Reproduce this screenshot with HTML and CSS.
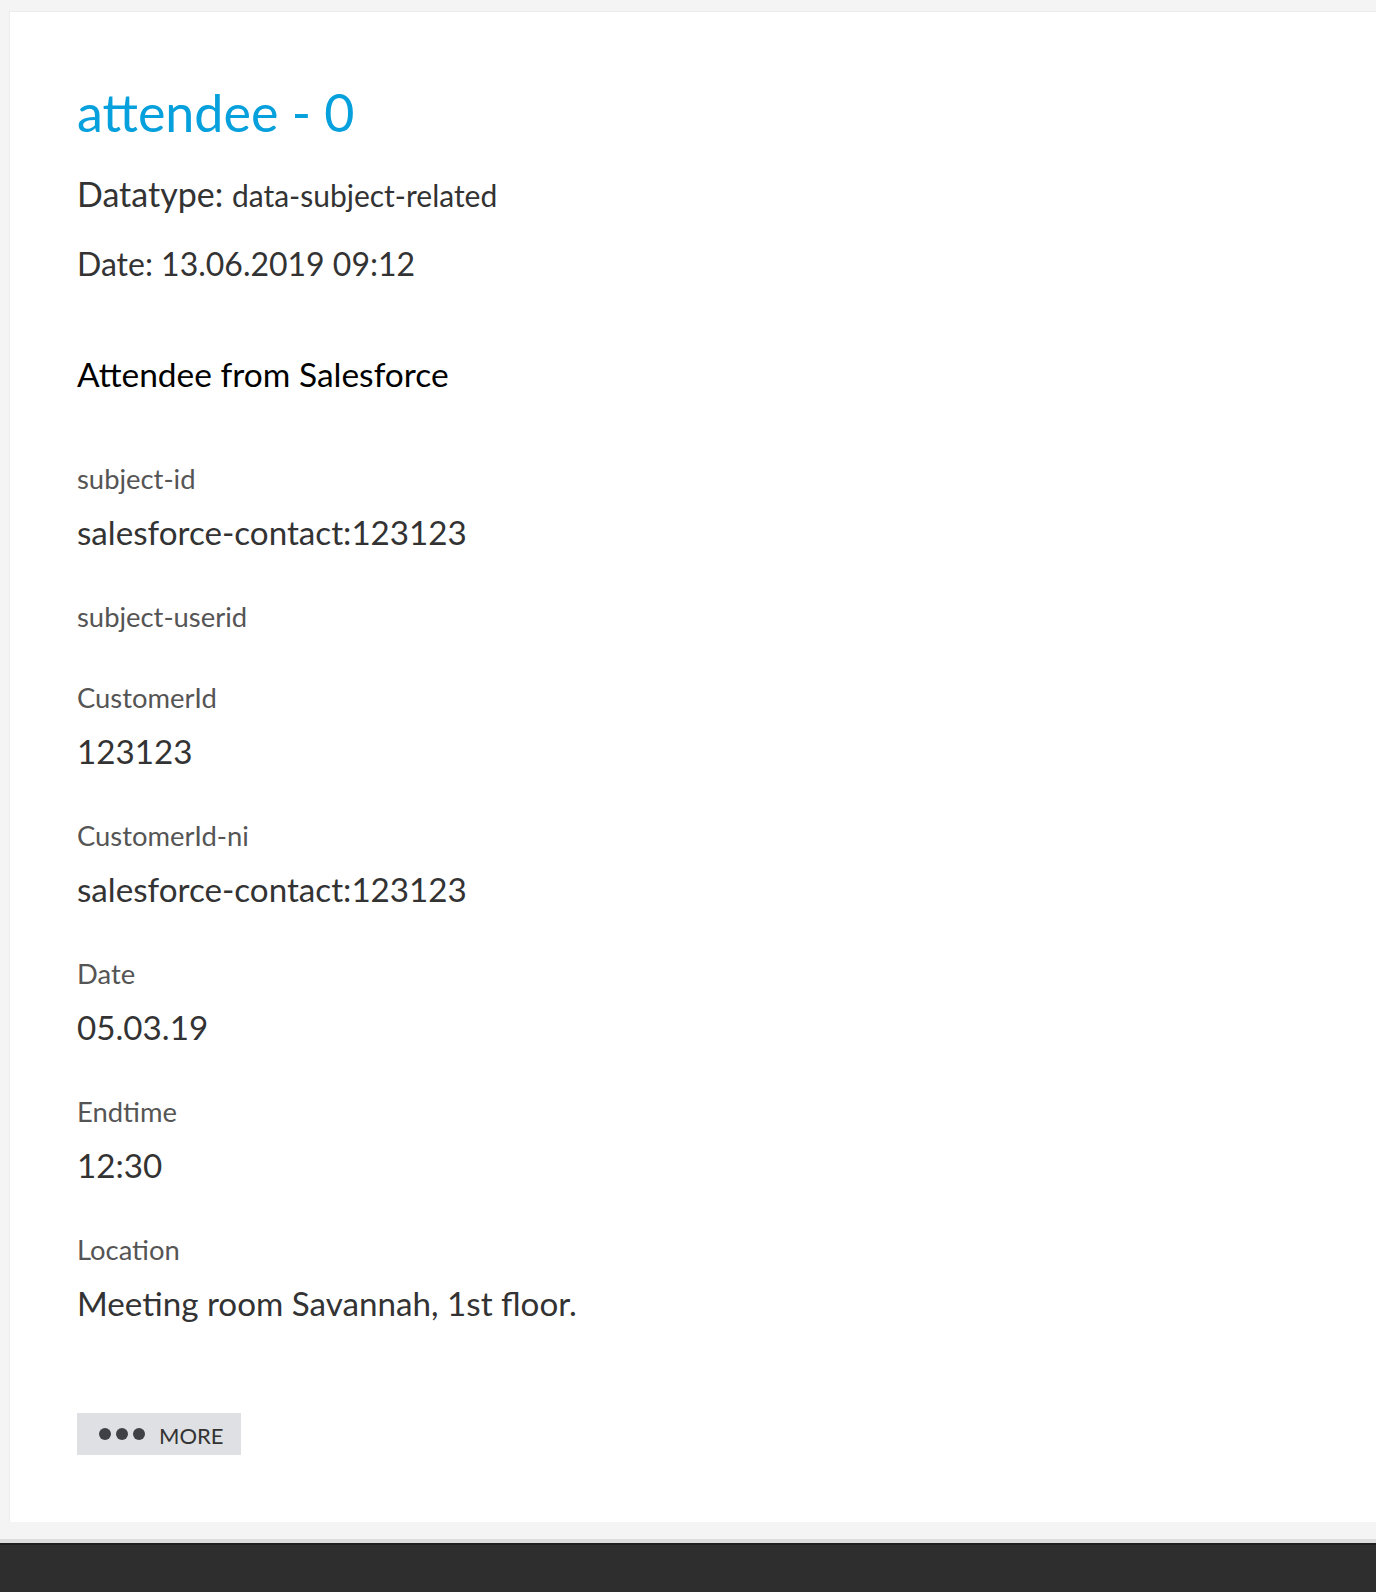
FILE: index.html
```html
<!DOCTYPE html>
<html lang="en">
<head>
<meta charset="utf-8">
<title>attendee - 0</title>
<link rel="stylesheet" href="styles.css">
</head>
<body>
<div class="page">
  <main class="card">
    <h1 class="title">attendee - 0</h1>
    <p class="meta">Datatype: <span class="meta-small">data-subject-related</span></p>
    <p class="meta meta-date">Date: 13.06.2019 09:12</p>
    <h2 class="section">Attendee from Salesforce</h2>
    <dl class="fields">
      <div class="field"><dt class="label">subject-id</dt><dd class="value">salesforce-contact:123123</dd></div>
      <div class="field"><dt class="label">subject-userid</dt><dd class="value"></dd></div>
      <div class="field"><dt class="label">CustomerId</dt><dd class="value">123123</dd></div>
      <div class="field"><dt class="label">CustomerId-ni</dt><dd class="value">salesforce-contact:123123</dd></div>
      <div class="field"><dt class="label">Date</dt><dd class="value">05.03.19</dd></div>
      <div class="field"><dt class="label">Endtime</dt><dd class="value">12:30</dd></div>
      <div class="field"><dt class="label">Location</dt><dd class="value">Meeting room Savannah, 1st floor.</dd></div>
    </dl>
    <button class="more" type="button"><span class="dots"><i></i><i></i><i></i></span><span class="more-text">MORE</span></button>
  </main>
</div>
<footer class="footer"></footer>
</body>
</html>
```

FILE: styles.css
```css
html, body {
  margin: 0;
  padding: 0;
}
body {
  background: #f4f4f4;
  font-family: "Lato", "Source Sans Pro", "Noto Sans", sans-serif;
  color: #333;
}
.page {
  padding: 12px 0 17px 10px;
}
.card {
  background: #fff;
  border-top: 1px solid #ececec;
  border-left: 1px solid #ececec;
  margin-top: -1px;
  margin-left: -1px;
  padding: 70px 66px 67px 67px;
  height: 1511px;
  box-sizing: border-box;
}
.title {
  margin: 0;
  font-weight: 400;
  font-size: 52px;
  line-height: 60px;
  color: #06a0dc;
}
.meta {
  margin: 30px 0 0 0;
  font-size: 34px;
  line-height: 44px;
  color: #333;
}
.meta-small {
  font-size: 30px;
}
.meta-date {
  margin-top: 25px;
  font-size: 32px;
}
.section {
  margin: 66px 0 0 0;
  font-weight: 400;
  font-size: 33.5px;
  line-height: 44px;
  color: #000;
}
.fields {
  margin: 55px 0 0 0;
  padding: 0;
}
.field {
  margin: 0 0 25px 0;
}
.label {
  margin: 0;
  font-size: 27.4px;
  line-height: 56px;
  color: #555;
}
.value {
  margin: 0;
  font-size: 33.2px;
  line-height: 51px;
  padding-bottom: 6px;
  color: #333;
}
.value:empty {
  display: none;
}
.more {
  margin-top: 78px;
  display: flex;
  align-items: center;
  gap: 14px;
  height: 42px;
  padding: 0 17px 0 22px;
  border: 0;
  background: #dfe0e3;
  font-family: inherit;
  font-size: 22px;
  color: #333;
  cursor: pointer;
}
.dots {
  display: flex;
  gap: 5px;
}
.dots i {
  display: block;
  width: 12px;
  height: 12px;
  border-radius: 50%;
  background: #3f4147;
}
.more-text {
  line-height: 1;
  padding-top: 3px;
}
.footer {
  height: 50px;
  border-top: 4px solid #dedede;
  background: #2e2e2e;
  box-shadow: inset 0 2px 0 #1f1f1f;
}
```
